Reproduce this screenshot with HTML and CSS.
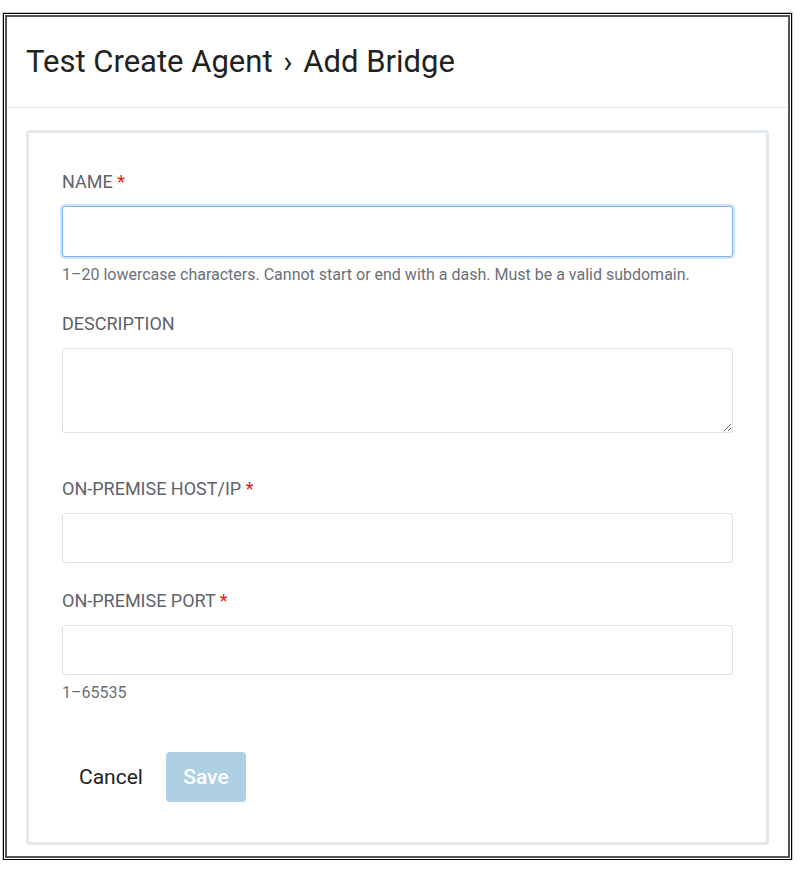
FILE: index.html
```html
<!DOCTYPE html>
<html lang="en">
<head>
    <meta charset="UTF-8">
    <meta name="viewport" content="width=device-width, initial-scale=1.0">
    <title>Add Bridge</title>
    <link rel="stylesheet" href="styles.css">
</head>
<body>

    <div class="frame">
        <div class="window">
            <header class="page-header">
                <h1>Test Create Agent <span class="crumb-sep">&rsaquo;</span> Add Bridge</h1>
            </header>

            <div class="card">
                <form class="bridge-form" onsubmit="return false;">
                    <div class="field field-name">
                        <label for="name">Name <span class="req">*</span></label>
                        <input type="text" id="name" class="text-input focused">
                        <p class="hint">1&ndash;20 lowercase characters. Cannot start or end with a dash. Must be a valid subdomain.</p>
                    </div>

                    <div class="field field-desc">
                        <label for="description">Description</label>
                        <textarea id="description" class="text-input textarea"></textarea>
                    </div>

                    <div class="field field-host">
                        <label for="host">On-premise Host/IP <span class="req">*</span></label>
                        <input type="text" id="host" class="text-input">
                    </div>

                    <div class="field field-port">
                        <label for="port">On-premise Port <span class="req">*</span></label>
                        <input type="text" id="port" class="text-input">
                        <p class="hint">1&ndash;65535</p>
                    </div>

                    <div class="actions">
                        <button type="button" class="btn-link">Cancel</button>
                        <button type="submit" class="btn-primary" disabled>Save</button>
                    </div>
                </form>
            </div>
        </div>
    </div>

</body>
</html>
```

FILE: styles.css
```css
body {
    font-family: 'Roboto', 'Liberation Sans', sans-serif;
    background-color: #fff;
    margin: 0;
    padding: 0;
    color: #222;
}

/* screenshot frame */
.frame {
    margin: 13px 0 0 3px;
    width: 789px;
    border: 1px solid #000;
    outline: 1px solid #c8c8c8;
    padding: 1px;
    box-sizing: border-box;
}

.window {
    border: 2px solid #555;
    height: 843px;
    box-sizing: border-box;
    display: flex;
    flex-direction: column;
}

.page-header {
    padding: 27px 19px 27px;
    border-bottom: 1px solid #e4e7ea;
}

.page-header h1 {
    margin: 0;
    font-size: 31px;
    line-height: 36px;
    font-weight: 400;
    color: #222;
}

.crumb-sep {
    margin: 0 3px;
}

.card {
    margin: 22px 19px 11px 19px;
    border: 3px solid #e3e8ec;
    border-radius: 4px;
    padding: 39px 33px 39px;
    flex: 1;
}

.field label {
    display: block;
    font-size: 18px;
    line-height: 20px;
    color: #5f6368;
    text-transform: uppercase;
    margin-bottom: 14px;
}

.req {
    color: #e3170a;
}

.text-input {
    display: block;
    width: 100%;
    height: 50px;
    box-sizing: border-box;
    border: 1px solid #dfe3e7;
    border-radius: 3px;
    font-family: inherit;
    font-size: 16px;
    padding: 0 12px;
    margin: 0;
    background: #fff;
    outline: none;
}

.text-input.focused {
    height: 51px;
    border-color: #7fb5ee;
    box-shadow: 0 0 0 2px #cfe4fb;
}

.textarea {
    height: 85px;
    resize: vertical;
    padding: 10px 12px;
}

.hint {
    margin: 8px 0 0;
    font-size: 16px;
    line-height: 19px;
    color: #6b7078;
}

.field-name {
    margin-bottom: 30px;
}

.field-desc {
    margin-bottom: 46px;
}

.field-host {
    margin-bottom: 28px;
}

.field-port {
    margin-bottom: 50px;
}

.actions {
    display: flex;
    align-items: center;
    gap: 23px;
    padding-left: 17px;
}

.btn-link {
    background: none;
    border: none;
    padding: 0;
    font-family: inherit;
    font-size: 21px;
    color: #222;
    cursor: pointer;
}

.btn-primary {
    height: 50px;
    width: 80px;
    border: none;
    border-radius: 4px;
    background-color: #aecfe4;
    color: #fff;
    font-family: inherit;
    font-size: 21px;
    font-weight: 500;
}
```
